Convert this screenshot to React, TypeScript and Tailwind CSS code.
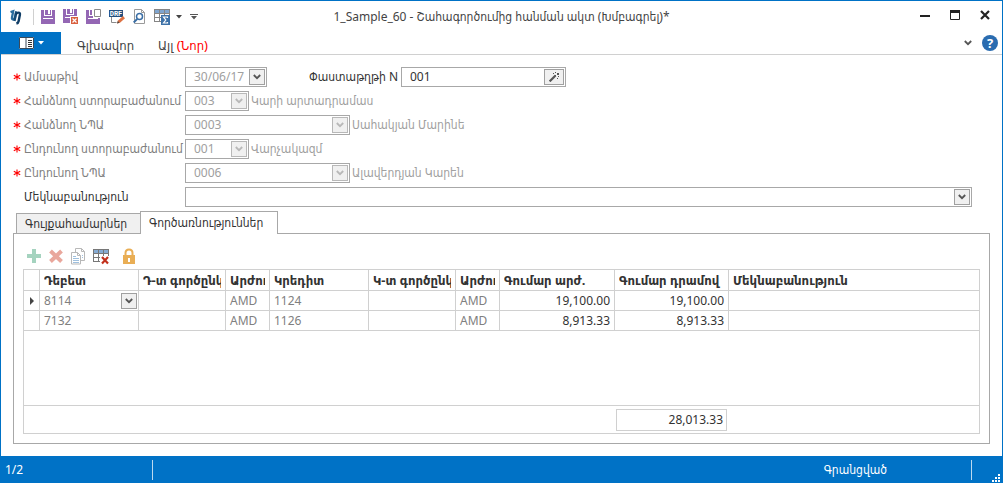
import type { ReactNode } from 'react';

const SaveBase = () => (
  <>
    <path d="M0 0h14v14H0z" fill="#9467b4" />
    <path d="M3 0h8v6H3z" fill="#fff" />
    <path d="M4 0h6v5H4z" fill="#9467b4" />
    <path d="M7 0h2v4H7z" fill="#fff" />
    <path d="M2 8h10v1H2z" fill="#fff" />
  </>
);

const Logo = () => (
  <svg width="13" height="16" viewBox="0 0 13 16">
    <path d="M1.500 3l2.700-.8L3 8.500q-.3 2 1.100 2 1.500-.2 2-2.600L7.300 2.500" fill="none" stroke="#2a6d9e" strokeWidth="2.300" />
    <path d="M7.300 2.500L5.500 12" stroke="#164c78" strokeWidth="2.400" />
    <path d="M6.800 5.500q1-1.900 2.600-1.900 1.900 0 1.500 2.200l-1.300 6.500q-.3 1.700-2.200 2.200" fill="none" stroke="#0f3d66" strokeWidth="2.400" />
  </svg>
);

const SaveIcon = () => (
  <svg width="14" height="14" viewBox="0 0 14 14"><SaveBase /></svg>
);

const SaveCloseIcon = () => (
  <svg width="15" height="15" viewBox="0 0 15 15">
    <SaveBase />
    <path d="M7 7h8v8H7z" fill="#fff" />
    <path d="M8 8h7v7H8z" fill="#d9603f" />
    <path d="M9.500 9.500l4 4M13.500 9.500l-4 4" stroke="#fff" strokeWidth="1.200" />
  </svg>
);

const SaveNewIcon = () => (
  <svg width="15" height="15" viewBox="0 0 15 15">
    <path d="M0 1h14v14H0z" fill="#9467b4" />
    <path d="M3 1h5v6H3z" fill="#fff" />
    <path d="M4 1h2v5H4z" fill="#9467b4" />
    <path d="M2 9h10v1H2z" fill="#fff" />
    <path d="M7 0h8v9H7z" fill="#fff" />
    <path d="M8.500 .5h6v7h-6z" fill="#fff" stroke="#8a8a8a" />
  </svg>
);

const DraftIcon = () => (
  <svg width="16" height="16" viewBox="0 0 16 16">
    <path d="M0 1h14v7H0z" fill="#24507f" />
    <text x="7" y="7" textAnchor="middle" fill="#fff" className="font-['Liberation_Mono'] text-[7px] font-bold">DRF</text>
    <path d="M2.500 8v5.500h5" fill="none" stroke="#8a8a8a" />
    <path d="M8 14.500l1-3L14 7l2 2.200-5 4.600z" fill="#dd7142" />
    <path d="M8 14.500l.8-2.500 1.700 1.700z" fill="#444" />
  </svg>
);

const PreviewIcon = () => (
  <svg width="13" height="15" viewBox="0 0 13 15">
    <path d="M1.500 .5h7l3 3v11h-10z" fill="#fff" stroke="#9a9a9a" />
    <path d="M8.500 .5v3h3" fill="none" stroke="#9a9a9a" />
    <circle cx="6.500" cy="7.500" r="3" fill="#fff" stroke="#3a6ea5" strokeWidth="1.500" />
    <path d="M4.300 9.900L.7 13.500" stroke="#3a6ea5" strokeWidth="2" />
  </svg>
);

const SumIcon = () => (
  <svg width="16" height="16" viewBox="0 0 16 16">
    <path d="M0 0h16v4H0z" fill="#7fa5cf" />
    <path d="M0 .5h16M0 4.500h16M0 8.500h8M0 12.500h8M.5 0v13M5.500 0v13M10.500 0v6M15.500 0v6" stroke="#858585" fill="none" />
    <path d="M7 6h9v10H7z" fill="#3e72a8" />
    <path d="M13.500 9V8h-4l2.300 3-2.300 3h4v-1" fill="none" stroke="#fff" strokeWidth="1.200" />
  </svg>
);

const Chevron = ({ color = '#555' }: { color?: string }) => (
  <svg width="8" height="6" viewBox="0 0 8 6" aria-hidden="true">
    <path d="M.8 1L4 4.200 7.200 1" fill="none" stroke={color} strokeWidth="1.800" />
  </svg>
);

const IconButton = ({ label, children }: { label: string; children: ReactNode }) => (
  <button type="button" aria-label={label} className="flex shrink-0 items-center justify-center">{children}</button>
);

const arrowBox = 'flex h-4 w-4 items-center justify-center border';

type ComboProps = { id: string; value: string; size: string; disabled?: boolean };

const Combo = ({ id, value, size, disabled = false }: ComboProps) => (
  <div className={`relative h-5 border border-[#a8a8a8] bg-white ${size}`}>
    <select id={id} disabled={disabled} defaultValue={value} className="block h-full w-full appearance-none pl-2 text-[#a0a0a0] opacity-100 outline-none">
      <option value={value}>{value}</option>
    </select>
    <span className={`pointer-events-none absolute top-px right-px bg-[#f0f0f0] ${arrowBox} ${disabled ? 'border-[#b8b8b8]' : 'border-[#a0a0a0]'}`}>
      <Chevron color={disabled ? '#b8b8b8' : '#555'} />
    </span>
  </div>
);

const FieldLabel = ({ id, text, required = false }: { id: string; text: string; required?: boolean }) => (
  <label htmlFor={id} className={`flex w-[172px] shrink-0 whitespace-nowrap ${required ? 'text-[#808080]' : 'text-[#333]'}`}>
    <span className="flex w-[11px] shrink-0 items-center">
      {required && (
        <svg width="8" height="8" viewBox="0 0 8 8" aria-hidden="true">
          <path d="M4 .5v7M.8 2.200l6.400 3.600M.8 5.800l6.400-3.600" stroke="#f00" strokeWidth="1.100" />
        </svg>
      )}
    </span>
    {text}
  </label>
);

const lookups = [
  { id: 'from-unit', label: 'Հանձնող ստորաբաժանում', value: '003', size: 'w-16', name: 'Կարի արտադրամաս' },
  { id: 'from-person', label: 'Հանձնող ՆՊԱ', value: '0003', size: 'w-[165px]', name: 'Սահակյան Մարինե' },
  { id: 'to-unit', label: 'Ընդունող ստորաբաժանում', value: '001', size: 'w-16', name: 'Վարչակազմ' },
  { id: 'to-person', label: 'Ընդունող ՆՊԱ', value: '0006', size: 'w-[165px]', name: 'Ալավերդյան Կարեն' },
];

const headers = ['', 'Դեբետ', 'Դ-տ գործընկեր', 'Արժույթ', 'Կրեդիտ', 'Կ-տ գործընկեր', 'Արժույթ', 'Գումար արժ.', 'Գումար դրամով', 'Մեկնաբանություն'];

const rows = [
  { debit: '8114', credit: '1124', amount: '19,100.00', current: true },
  { debit: '7132', credit: '1126', amount: '8,913.33', current: false },
];

const cell = 'h-5 overflow-hidden border-r border-b border-[#d0d0d0] px-1 whitespace-nowrap';
const soft = `${cell} text-[#808080]`;
const money = `${cell} text-right text-[#333]`;

export default function App() {
  return (
    <div className="flex min-h-screen flex-col border-t border-r border-l border-[#0072c6] bg-white font-['Noto_Sans','DejaVu_Sans_Condensed',sans-serif] text-[12px] leading-4 text-[#444]">
      <header>
        <div className="grid h-[31px] grid-cols-[1fr_auto_1fr] items-center">
          <div className="flex items-center pl-2">
            <Logo />
            <span className="mr-[7px] ml-[11px] h-4 w-px bg-[#d0d0d0]" />
            <div className="flex items-center gap-2">
              <IconButton label="Save"><SaveIcon /></IconButton>
              <IconButton label="Save and close"><SaveCloseIcon /></IconButton>
              <IconButton label="Save and new"><SaveNewIcon /></IconButton>
              <IconButton label="Draft"><DraftIcon /></IconButton>
              <IconButton label="Preview"><PreviewIcon /></IconButton>
              <IconButton label="Totals">
                <SumIcon />
                <svg className="ml-1.5" width="6" height="4" viewBox="0 0 6 4"><path d="M0 0h6L3 3.500z" fill="#444" /></svg>
              </IconButton>
              <IconButton label="Customize toolbar">
                <svg width="8" height="6" viewBox="0 0 8 6"><path d="M0 0h8v1H0zM1 2h6L4 5.500z" fill="#555" /></svg>
              </IconButton>
            </div>
          </div>
          <h1>1_Sample_60 - Շահագործումից հանման ակտ (Խմբագրել)*</h1>
          <div className="flex items-center justify-end gap-5 pr-3 pb-1">
            <IconButton label="Minimize"><svg width="10" height="10" viewBox="0 0 10 10"><path d="M0 5h10v2H0z" fill="#222" /></svg></IconButton>
            <IconButton label="Maximize"><svg width="10" height="10" viewBox="0 0 10 10"><path d="M.5 1v8.500h9V1" fill="none" stroke="#222" /><path d="M0 0h10v3H0z" fill="#222" /></svg></IconButton>
            <IconButton label="Close"><svg width="10" height="10" viewBox="0 0 10 10"><path d="M1 1l8 8M9 1L1 9" stroke="#222" strokeWidth="2.200" /></svg></IconButton>
          </div>
        </div>
        <div className="flex h-[23px] items-center border-b border-[#d0d0d0]">
          <button type="button" aria-label="Menu" className="flex h-full w-[60px] items-center justify-center gap-1 bg-[#0072c6]">
            <svg width="15" height="12" viewBox="0 0 15 12"><path d="M0 0h15v12H0z" fill="#fff" /><path d="M.5 .5h14v11H.5zM7 .5v11" fill="none" stroke="#3b4a5a" /><path d="M9 3h4v1H9zM9 5h4v1H9zM9 7h4v1H9zM9 9h4v1H9z" fill="#333" /></svg>
            <svg width="6" height="4" viewBox="0 0 6 4"><path d="M0 0h6L3 3.500z" fill="#fff" /></svg>
          </button>
          <nav className="flex flex-1 gap-6 pt-1 pl-4 text-[13px]">
            <a href="#main">Գլխավոր</a>
            <a href="#other">Այլ <span className="text-[#f00]">(Նոր)</span></a>
          </nav>
          <div className="flex items-center gap-2.5 pr-1">
            <IconButton label="Collapse ribbon"><Chevron /></IconButton>
            <button type="button" aria-label="Help" className="flex h-4 w-4 items-center justify-center rounded-full bg-[#2a6cb0] text-[13px] font-bold text-white">?</button>
          </div>
        </div>
      </header>

      <main className="flex flex-1 flex-col px-3 pt-3 pb-3">
        <form className="flex flex-col gap-1">
          <div className="flex h-5 items-center">
            <FieldLabel id="date" text="Ամսաթիվ" required />
            <div className="flex h-5 w-[82px] border border-[#a8a8a8] p-px">
              <input id="date" defaultValue="30/06/17" className="min-w-0 flex-1 pl-[7px] text-[#a0a0a0] outline-none" />
              <button type="button" aria-label="Pick a date" className={`border-[#a0a0a0] bg-[#f0f0f0] ${arrowBox}`}><Chevron /></button>
            </div>
            <label htmlFor="number" className="w-[134px] pr-[3px] text-right whitespace-nowrap text-[#333]">Փաստաթղթի N</label>
            <div className="flex h-5 w-[165px] border border-[#a8a8a8] p-px">
              <input id="number" defaultValue="001" className="min-w-0 flex-1 pl-[7px] text-[#333] outline-none" />
              <button type="button" aria-label="Generate number" className="flex h-4 w-5 items-center justify-center border border-[#a0a0a0] bg-[#f0f0f0]">
                <svg width="10" height="10" viewBox="0 0 10 10"><path d="M.6 9.400L6.500 3.500" stroke="#555" strokeWidth="2.200" /><path d="M4 1h1v1H4zM6 0h1v1H6zM8 1h2v2H8zM9 4h1v1H9zM8 6h1v1H8zM6 3h1v1H6z" fill="#555" /></svg>
              </button>
            </div>
          </div>
          {lookups.map((f) => (
            <div key={f.id} className="flex h-5 items-center">
              <FieldLabel id={f.id} text={f.label} required />
              <Combo id={f.id} value={f.value} size={f.size} disabled />
              <span className="pl-0.5 text-[#a0a0a0]">{f.name}</span>
            </div>
          ))}
          <div className="flex h-5 items-center pr-[18px]">
            <FieldLabel id="comment" text="Մեկնաբանություն" />
            <Combo id="comment" value="" size="flex-1" />
          </div>
        </form>

        <div role="tablist" className="mt-1 flex h-[22px] items-end pl-[3px]">
          <button type="button" role="tab" aria-selected="false" className="h-5 w-[124px] border-t border-l border-[#a8a8a8] bg-[#f0f0f0] pl-2 text-left text-[#333]">Գույքահամարներ</button>
          <button type="button" role="tab" aria-selected="true" className="z-10 -mb-px h-[23px] w-[138px] border border-b-0 border-[#a8a8a8] bg-white pl-2 text-left text-[#333]">Գործառնություններ</button>
        </div>
        <section className="flex flex-1 flex-col border border-[#a8a8a8] px-[9px] pt-[11px] pb-[9px]">
          <div className="flex h-6 items-center gap-1.5 pb-0.5 pl-[3px]">
            <IconButton label="Add"><svg width="16" height="16" viewBox="0 0 16 16"><path d="M6 1h4v5h5v4h-5v5H6v-5H1V6h5z" fill="#a5d3bf" /></svg></IconButton>
            <IconButton label="Delete"><svg width="16" height="16" viewBox="0 0 16 16"><path d="M2.500 3l11 10.500M13.500 3l-11 10.500" stroke="#e9a79c" strokeWidth="4" /></svg></IconButton>
            <IconButton label="Copy"><svg width="16" height="17" viewBox="0 0 16 17"><path d="M5.500 .5h6l3 3v9h-9z" fill="#fff" stroke="#b8b8b8" /><path d="M1.500 4.500h6l3 3v8.500h-9z" fill="#fff" stroke="#b8b8b8" /><path d="M7.500 4.500v3h3M11.500 .5v3h3" fill="none" stroke="#b8b8b8" /><path d="M3 8.500h3M3 10.500h6M3 12.500h6M3 14.500h6M12 7.500h1M12 9.500h1" stroke="#9fc0de" /></svg></IconButton>
            <IconButton label="Clear table"><svg width="18" height="17" viewBox="0 0 18 17"><path d="M1 1h16v4H1z" fill="#86abd3" /><path d="M1 1.500h16M1 5.500h16M1 9.500h11M1 13.500h8M1.500 1v13M6.500 1v13M11.500 1v8M16.500 1v8" stroke="#777" fill="none" /><path d="M8 8h9v8H8z" fill="#fff" /><path d="M10 9l6 6.500M16 9l-6 6.500" stroke="#c2301c" strokeWidth="2.200" /></svg></IconButton>
            <span className="ml-1.5 flex"><IconButton label="Lock"><svg width="14" height="17" viewBox="0 0 14 17"><path d="M3.500 8V5q0-3.500 3.500-3.500T10.500 5v3" fill="none" stroke="#e9ae55" strokeWidth="2" /><path d="M1 7h12v9H1z" fill="#e9ae55" /><path d="M6 10h2v4H6z" fill="#fff" /></svg></IconButton></span>
          </div>
          <div className="flex flex-1 flex-col border border-[#d0d0d0]">
            <div className="min-h-[135px] flex-1">
              <table className="w-full table-fixed border-separate border-spacing-0">
                <colgroup>
                  <col className="w-4" />
                  <col className="w-[99px]" />
                  <col className="w-[87px]" />
                  <col className="w-11" />
                  <col className="w-[99px]" />
                  <col className="w-[87px]" />
                  <col className="w-11" />
                  <col className="w-[115px]" />
                  <col className="w-[114px]" />
                  <col />
                </colgroup>
                <thead>
                  <tr>
                    {headers.map((h, i) => (
                      <th key={i} scope="col" className="h-[21px] border-r border-b border-[#d0d0d0] px-1 text-left text-[13px] font-bold text-[#333] last:border-r-0">
                        <div className="overflow-hidden whitespace-nowrap">{h}</div>
                      </th>
                    ))}
                  </tr>
                </thead>
                <tbody>
                  {rows.map((r) => (
                    <tr key={r.debit}>
                      <td className={cell}>
                        {r.current && <svg className="ml-0.5" width="4" height="8" viewBox="0 0 4 8"><path d="M0 0l4 4-4 4z" fill="#444" /></svg>}
                      </td>
                      <td className="h-5 border-r border-b border-[#d0d0d0] p-0 pr-px pl-1 text-[#808080]">
                        <div className="flex items-center justify-between">
                          {r.debit}
                          {r.current && <button type="button" aria-label="Open account list" className={`border-[#a0a0a0] bg-[#f0f0f0] ${arrowBox}`}><Chevron /></button>}
                        </div>
                      </td>
                      <td className={soft} />
                      <td className={soft}>AMD</td>
                      <td className={soft}>{r.credit}</td>
                      <td className={soft} />
                      <td className={soft}>AMD</td>
                      <td className={money}>{r.amount}</td>
                      <td className={money}>{r.amount}</td>
                      <td className="h-5 border-b border-[#d0d0d0]" />
                    </tr>
                  ))}
                </tbody>
              </table>
            </div>
            <div className="flex h-7 items-center border-t border-[#d0d0d0] pl-[592px]">
              <output className="block w-[111px] border border-[#d0d0d0] px-[3px] py-0.5 text-right text-[#333]">28,013.33</output>
            </div>
          </div>
        </section>
      </main>

      <footer className="flex h-[27px] items-center bg-[#0072c6] text-white">
        <span className="w-[151px] pl-1">1/2</span>
        <span className="h-5 w-px bg-[#bcd9ef]" />
        <span className="flex-1 pr-[84px] text-right">Գրանցված</span>
        <span className="h-5 w-px bg-[#bcd9ef]" />
        <svg className="ml-5 self-end" width="10" height="10" viewBox="0 0 10 10"><path d="M6 1h2v2H6zM3 4h2v2H3zM6 4h2v2H6zM0 7h2v2H0zM3 7h2v2H3zM6 7h2v2H6z" fill="#fff" /></svg>
      </footer>
    </div>
  );
}
